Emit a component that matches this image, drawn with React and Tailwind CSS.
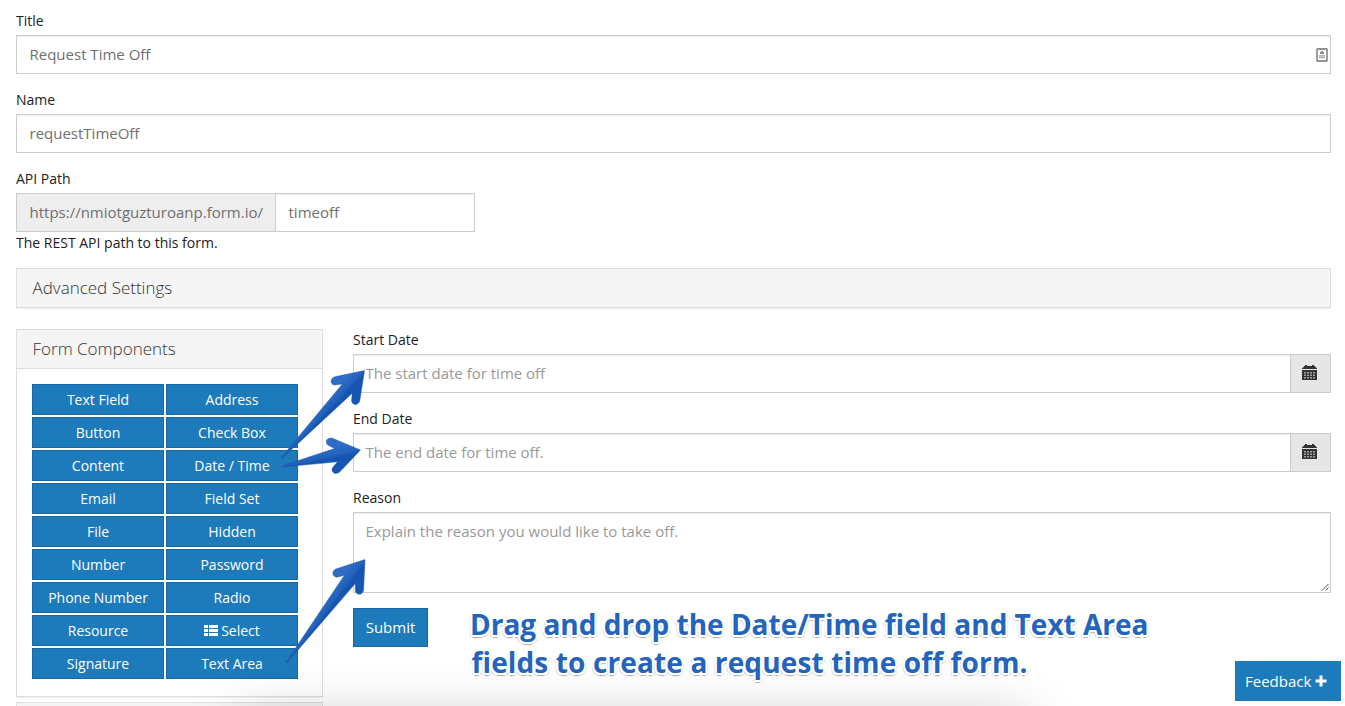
import React from "react";

const rows = [
  ["Text Field", "Address"],
  ["Button", "Check Box"],
  ["Content", "Date / Time"],
  ["Email", "Field Set"],
  ["File", "Hidden"],
  ["Number", "Password"],
  ["Phone Number", "Radio"],
  ["Resource", "Select"],
  ["Signature", "Text Area"],
];

function Label({ children }) {
  return <div className="mb-[4px] h-[21px] text-[14px] leading-[21px] text-[#222222]">{children}</div>;
}

function ListIcon() {
  return (
    <svg className="mr-[3px] h-[11px] w-[14px]" viewBox="0 0 14 11" fill="currentColor">
      <path d="M0 0h4v3H0zM5 0h9v3H5zM0 4h4v3H0zM5 4h9v3H5zM0 8h4v3H0zM5 8h9v3H5z" />
    </svg>
  );
}

function CalendarIcon() {
  return (
    <svg className="h-[16px] w-[15px]" viewBox="0 0 15 16">
      <path d="M2 1.5V1h1V0h2v1h5V0h2v1h1v.5L15 3.5V4H0v-.5z" fill="#333" />
      <rect x="0" y="5" width="15" height="10" fill="#333" />
      <path
        d="M2 7h2v1.5H2zM5 7h2v1.5H5zM8 7h2v1.5H8zM11 7h2v1.5h-2zM2 9.5h2V11H2zM5 9.5h2V11H5zM8 9.5h2V11H8zM11 9.5h2V11h-2zM2 12h2v1.5H2zM5 12h2v1.5H5zM8 12h2v1.5H8zM11 12h2v1.5h-2z"
        fill="#a0a0a0"
      />
    </svg>
  );
}

function ContactIcon() {
  return (
    <svg className="h-[14px] w-[12px]" viewBox="0 0 12 14">
      <rect x="1" y="1" width="10" height="12" rx="0.5" fill="#fff" stroke="#929292" strokeWidth="1.8" />
      <path d="M5 3h2v1h1v2H4V4h1z" fill="#8d8d8d" />
      <path d="M3 7h6v1H3z" fill="#b0b0b0" />
      <path d="M3 8.4h6v1.8H3z" fill="#a8a8a8" />
    </svg>
  );
}

function DateField({ label, placeholder }) {
  return (
    <div className="mb-[15px]">
      <Label>{label}</Label>
      <div className="flex h-[39px] border border-[#cccccc]">
        <div className="flex-1 pl-[11.5px] text-[15px] leading-[37px] text-[#999999] shadow-[inset_0_1px_1px_rgba(0,0,0,0.075)]">
          {placeholder}
        </div>
        <div className="flex w-[40px] border-l border-[#cccccc] bg-[#e6e6e6] pl-[11px] pt-[10px]">
          <CalendarIcon />
        </div>
      </div>
    </div>
  );
}

// Tapered arrow pointing along +x, with its tip at (len, 0).
function Arrow({ x1, y1, x2, y2, id }) {
  const len = Math.hypot(x2 - x1, y2 - y1);
  const angle = (Math.atan2(y2 - y1, x2 - x1) * 180) / Math.PI;
  const d = `M0 -0.6 L${len - 25} -6.8 L${len - 31} -11.5 A3.9 3.9 0 0 1 ${len - 28} -18 Q${len - 26} -18.3 ${len - 24} -16.6 L${len} 0 L${len - 24} 16.6 Q${len - 26} 18.3 ${len - 28} 18 A3.9 3.9 0 0 1 ${len - 31} 11.5 L${len - 25} 6.8 L0 0.6 Z`;
  return (
    <g transform={`translate(${x1} ${y1}) rotate(${angle})`}>
      <defs>
        <linearGradient id={id} gradientUnits="userSpaceOnUse" x1="0" y1="-9" x2="0" y2="9">
          <stop offset="0" stopColor="#2d6dc6" />
          <stop offset="0.45" stopColor="#2363bf" />
          <stop offset="0.65" stopColor="#1555ae" />
          <stop offset="1" stopColor="#1657b3" />
        </linearGradient>
      </defs>
      <path d={d} fill={`url(#${id})`} stroke="#174f9f" strokeWidth="0.4" />
    </g>
  );
}

export default function App() {
  return (
    <div className="relative h-[706px] w-[1345px] overflow-hidden bg-white pl-[16px] pr-[14px] pt-[10px] font-['Open_Sans','Noto_Sans',sans-serif] text-[#222222]">
      <div className="mb-[15px]">
        <Label>Title</Label>
        <div className="flex h-[39px] items-center justify-between border border-[#cccccc] pl-[12.5px] pr-[2px] text-[15px] text-[#6f6f6f] shadow-[inset_0_1px_1px_rgba(0,0,0,0.075)]">
          <span>Request Time Off</span>
          <ContactIcon />
        </div>
      </div>
      <div className="mb-[15px]">
        <Label>Name</Label>
        <div className="h-[39px] border border-[#cccccc] pl-[12.5px] text-[15px] leading-[37px] text-[#6f6f6f] shadow-[inset_0_1px_1px_rgba(0,0,0,0.075)]">
          requestTimeOff
        </div>
      </div>
      <Label>API Path</Label>
      <div className="flex h-[39px] w-[459px] border border-[#cccccc] text-[15px] leading-[37px] text-[#6f6f6f]">
        <div className="w-[259px] border-r border-[#cccccc] bg-[#eeeeee] pl-[12.5px]">https://nmiotguzturoanp.form.io/</div>
        <div className="flex-1 pl-[12.5px] shadow-[inset_0_1px_1px_rgba(0,0,0,0.075)]">timeoff</div>
      </div>
      <div className="text-[14px] leading-[21px]">The REST API path to this form.</div>
      <div className="mt-[15px] h-[40px] border border-[#dddddd] bg-[#f5f5f5] pl-[15.5px] text-[17px] leading-[38px] font-light text-[#333333] shadow-[0_1px_1px_rgba(0,0,0,0.05)]">
        Advanced Settings
      </div>

      <div className="mt-[21px] flex gap-[30px]">
        <div className="w-[307px]">
          <div className="h-[368px] border border-[#dddddd] shadow-[0_1px_1px_rgba(0,0,0,0.05)]">
            <div className="h-[39px] border-b border-[#dddddd] bg-[#f5f5f5] pl-[15.5px] text-[17px] leading-[38px] font-light text-[#333333]">
              Form Components
            </div>
            <div className="grid grid-cols-[132px_132px] gap-[2px] pl-[15px] pt-[15px]">
              {rows.flat().map((name) => (
                <button
                  key={name}
                  className="flex h-[31px] items-center justify-center border border-[#1967a1] bg-[#1d7abb] text-[14px] leading-[21px] text-white"
                >
                  {name === "Select" && <ListIcon />}
                  {name}
                </button>
              ))}
            </div>
          </div>
          <div className="mt-[5px] h-[40px] border border-[#dddddd] bg-[#f5f5f5]" />
        </div>
        <div className="flex-1">
          <DateField label="Start Date" placeholder="The start date for time off" />
          <DateField label="End Date" placeholder="The end date for time off." />
          <Label>Reason</Label>
          <div className="flex h-[81px] items-end justify-between border border-[#cccccc] pl-[11.5px] text-[15px] text-[#999999] shadow-[inset_0_1px_1px_rgba(0,0,0,0.075)]">
            <span className="self-start leading-[37px]">Explain the reason you would like to take off.</span>
            <svg className="h-[9px] w-[9px]" viewBox="0 0 9 9" stroke="#555" strokeWidth="1">
              <path d="M1 7.5L7.5 1M4.5 7.5L7.5 4.5" />
            </svg>
          </div>
          <button className="mt-[15px] flex h-[39px] w-[75px] items-center justify-center border border-[#1967a1] bg-[#1d7abb] text-[15px] text-white">
            Submit
          </button>
        </div>
      </div>

      <div className="absolute left-[240px] top-[718px] h-[100px] w-[790px] shadow-[0_0_55px_rgba(0,0,0,0.22)]" />

      <svg className="absolute left-0 top-0" width="1345" height="706" viewBox="0 0 1345 706">
        <Arrow id="arrow-start" x1={282} y1={457.5} x2={364.5} y2={370.5} />
        <Arrow id="arrow-end" x1={282} y1={466.5} x2={360.5} y2={450} />
        <Arrow id="arrow-reason" x1={286.5} y1={662.5} x2={365} y2={559.5} />
      </svg>

      <div className="absolute left-[470px] top-[605px] whitespace-nowrap font-['Open_Sans'] text-[28px] leading-[38px] font-bold text-[#2464bb] [text-shadow:-2px_0_0_#fff,2px_0_0_#fff,0_-2px_0_#fff,0_2px_0_#fff,1.5px_1.5px_0_#fff,-1.5px_1.5px_0_#fff,1.5px_-1.5px_0_#fff,-1.5px_-1.5px_0_#fff,0_3px_1px_#aaa,2px_2px_1px_#bbb,-2px_2px_1px_#bbb]">
        <div>Drag and drop the Date/Time field and Text Area</div>
        <div className="pl-[1.5px] tracking-[0.13px]">fields to create a request time off form.</div>
      </div>

      <button className="absolute left-[1235px] top-[661px] flex h-[40px] w-[106px] items-center bg-[#1d7abb] pl-[10px] text-[15px] text-white">
        Feedback
        <svg className="ml-[4px] h-[12px] w-[12px]" viewBox="0 0 12 12" fill="currentColor">
          <path d="M4.5 0.5h3v4h4v3h-4v4h-3v-4h-4v-3h4z" />
        </svg>
      </button>
    </div>
  );
}
